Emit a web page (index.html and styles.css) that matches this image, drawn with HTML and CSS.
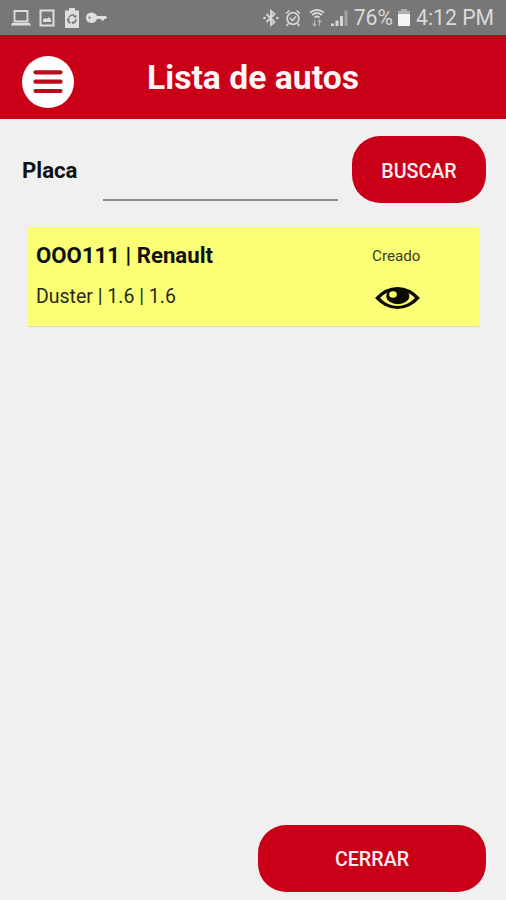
FILE: index.html
```
<!DOCTYPE html>
<html lang="es">
<head>
  <meta charset="UTF-8">
  <meta name="viewport" content="width=device-width, initial-scale=1.0">
  <title>Lista de autos</title>
  <link rel="stylesheet" href="styles.css">
</head>
<body>
  <div class="screen">
    <div class="status-bar">
      <div class="status-left">
        <svg class="icon-laptop" width="20" height="18" viewBox="0 0 20 18">
          <path d="M3.500 2h13v10.500h-13z" fill="none" stroke="#dedede" stroke-width="1.800"/>
          <path d="M1 14h18l1 2.500H0z" fill="#dedede"/>
        </svg>
        <svg class="icon-image" width="16" height="18" viewBox="0 0 16 18">
          <path d="M1.500 1.500h13v15h-13z" fill="none" stroke="#dedede" stroke-width="2"/>
          <path d="M4 13v-2.500l2-1.500 2 1 2-2 2 2.500V13z" fill="#dedede"/>
        </svg>
        <svg class="icon-recycle" width="14" height="20" viewBox="0 0 14 20">
          <path d="M0 2.500h4V0h6v2.500h4V20H0z" fill="#dedede"/>
          <path d="M4 9.500q3-5 6-.5M11 11q0 4-3.500 4M5.500 15Q2.500 14 3 11" fill="none" stroke="#777" stroke-width="1.500"/>
          <path d="M8.500 9.500h3V6.500zM8.500 12.500v4l-2-2zM1.500 12l2-2.500 1.500 2.500z" fill="#777"/>
        </svg>
        <svg class="icon-key" width="21" height="12" viewBox="0 0 21 12">
          <path d="M5.500.5q4 0 5.500 3.500h9l1 1.500L19.500 7H18v1.500h-3V7h-4q-1.500 4-5.500 4Q0 10.500 0 5.700T5.500.5z" fill="#dedede"/>
          <circle cx="3.500" cy="5.700" r="1.100" fill="#777"/>
        </svg>
      </div>
      <div class="status-right">
        <svg class="icon-bluetooth" width="16" height="18" viewBox="0 0 16 18">
          <path d="M3.500 5l8 8L8 16V2l3.500 3-8 8" fill="none" stroke="#d6d6d6" stroke-width="1.900"/>
          <circle cx="1.500" cy="9" r="1.300" fill="#d6d6d6"/>
          <circle cx="14.200" cy="9" r="1.300" fill="#d6d6d6"/>
        </svg>
        <svg class="icon-alarm" width="16" height="18" viewBox="0 0 16 18">
          <circle cx="8" cy="9.500" r="5.900" fill="none" stroke="#d6d6d6" stroke-width="1.800"/>
          <path d="M1 4.500L4.500 1.500M15 4.500l-3.500-3M3.500 14.500L1.500 17M12.500 14.500l2 2.500M5 9l2.500 2.500L11 7.500" fill="none" stroke="#d6d6d6" stroke-width="1.600"/>
        </svg>
        <svg class="icon-wifi" width="16" height="18" viewBox="0 0 16 18">
          <path d="M1 3.500q7-5 14 0M3 6q5-4 10 0M5.500 8.500q2.500-2 5 0" fill="none" stroke="#d6d6d6" stroke-width="1.900"/>
          <path d="M5.500 11v6M3.500 14.500l2 2.500 1.500-2M10.500 17v-6M9 13l1.500-2 2 2.500" fill="none" stroke="#b4b4b4" stroke-width="1.200"/>
        </svg>
        <svg class="icon-signal" width="17" height="18" viewBox="0 0 17 18">
          <path d="M0 14.500h3V17H0zM4.500 11.500h3V17h-3zM9 7h3v10H9z" fill="#d6d6d6"/>
          <path d="M13.500 1.500h3V17h-3z" fill="#a2a2a2"/>
        </svg>
        <span class="battery-text">76%</span>
        <svg class="icon-battery" width="12" height="17" viewBox="0 0 12 17">
          <path d="M0 2h3V0h6v2h3v3H0z" fill="#b0b0b0"/>
          <path d="M0 5h12v12H0z" fill="#f4f4f4"/>
        </svg>
        <span class="time">4:12 PM</span>
      </div>
    </div>

    <header class="header">
      <button class="menu-btn" aria-label="Menu">
        <svg width="52" height="52" viewBox="0 0 52 52">
          <circle cx="26" cy="26" r="26" fill="#fff"/>
          <path d="M13.500 16.300h25M13.500 25.700h25M13.500 35h25" stroke="#c00a1c" stroke-width="4.200" stroke-linecap="round"/>
        </svg>
      </button>
      <h1 class="title">Lista de autos</h1>
    </header>

    <form class="search" onsubmit="event.preventDefault()">
      <label for="placa">Placa</label>
      <input type="text" id="placa">
      <button type="submit" class="btn btn-search">BUSCAR</button>
    </form>

    <main class="list">
      <div class="car-card">
        <div class="car-info">
          <div class="car-name">OOO111 | Renault</div>
          <div class="car-model">Duster | 1.6 | 1.6</div>
        </div>
        <div class="car-status">
          <div class="state">Creado</div>
          <svg class="icon-eye" width="45" height="22" viewBox="0 0 45 22">
            <path d="M0 11Q10 0 22.500 0T45 11Q35 22 22.500 22T0 11z" fill="#0b0b00"/>
            <path d="M5 11Q13 3 22.500 3T40 11Q32 19 22.500 19T5 11z" fill="#fbff75"/>
            <ellipse cx="22.800" cy="9" rx="11.500" ry="8.300" fill="#0b0b00"/>
            <ellipse cx="18" cy="7.500" rx="3.800" ry="3.300" fill="#fbff75"/>
          </svg>
        </div>
      </div>
    </main>

    <footer class="footer">
      <button class="btn btn-close">CERRAR</button>
    </footer>
  </div>
</body>
</html>
```

FILE: styles.css
```
* {
  box-sizing: border-box;
}

body {
  margin: 0;
  font-family: Roboto, "Liberation Sans", sans-serif;
  background: #f0f0f0;
  color: #111;
}

.screen {
  display: flex;
  flex-direction: column;
  height: 900px;
}

/* Status bar */
.status-bar {
  display: flex;
  justify-content: space-between;
  height: 35px;
  padding: 0 12px 0 11px;
  background: #777;
  color: #dadada;
  font-size: 21.2px;
}

.status-left,
.status-right {
  display: flex;
  align-items: center;
}

.status-left {
  gap: 8px;
}

.icon-recycle {
  margin: 0 0 0 2px;
}

.icon-key {
  margin-left: -1px;
}

.status-right {
  gap: 6px;
}

.icon-wifi {
  margin: 0 0 0 2px;
}

.icon-battery {
  margin-left: -1px;
}

.battery-text,
.time {
  line-height: 35px;
  white-space: nowrap;
}

/* Header */
.header {
  display: flex;
  height: 84px;
  padding: 21px 22px 0;
  background: #c90018;
}

.menu-btn {
  width: 52px;
  height: 52px;
  padding: 0;
  border: none;
  background: none;
}

.menu-btn svg {
  display: block;
}

.title {
  margin: 0 0 0 73px;
  font-size: 33.7px;
  line-height: 44px;
  font-weight: bold;
  color: #fff5f6;
  white-space: nowrap;
}

/* Search */
.search {
  display: flex;
  align-items: center;
  height: 67px;
  margin: 17px 20px 0 22px;
}

.search label {
  width: 81px;
  font-size: 22.2px;
  font-weight: bold;
}

.search input {
  width: 235px;
  height: 63px;
  margin-right: 14px;
  padding: 0;
  border: none;
  border-bottom: 2px solid #8b8b8b;
  background: none;
  font-size: 22px;
}

.btn {
  height: 67px;
  padding: 1px 0 0;
  border: none;
  border-radius: 28px;
  background: #c90018;
  color: #ffeef0;
  font-family: inherit;
  font-size: 19.7px;
  font-weight: 500;
}

.btn-search {
  width: 134px;
  padding-top: 3px;
}

/* Car list */
.list {
  flex: 1;
  padding: 24px 27.5px 0 28px;
}

.car-card {
  display: flex;
  height: 99px;
  padding: 0 8px;
  background: #fbff75;
  box-shadow: 0 1px 1px #d8d8c8;
}

.car-info {
  width: 336px;
}

.car-name {
  margin-top: 14px;
  font-size: 22.2px;
  line-height: 28px;
  font-weight: bold;
}

.car-model {
  margin-top: 15px;
  font-size: 19.5px;
  line-height: 25px;
  color: #2a2a18;
}

.state {
  margin-top: 18px;
  font-size: 15.2px;
  line-height: 23px;
  color: #3a3a20;
}

.icon-eye {
  display: block;
  margin: 19px 0 0 3px;
}

/* Footer */
.footer {
  display: flex;
  justify-content: flex-end;
  padding: 0 20px 8px;
}

.btn-close {
  width: 228px;
}
```
